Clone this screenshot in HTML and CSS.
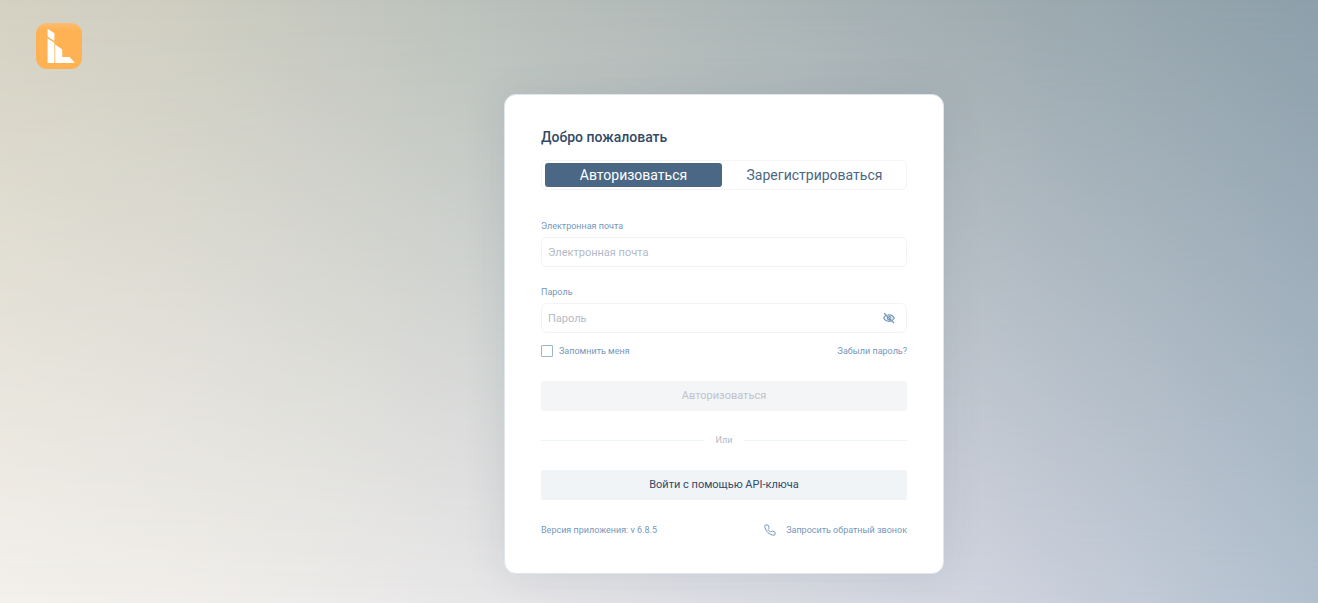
FILE: index.html
```
<!DOCTYPE html>
<html lang="ru">
<head>
    <meta charset="UTF-8">
    <meta name="viewport" content="width=device-width, initial-scale=1.0">
    <title>Авторизоваться</title>
    <link rel="stylesheet" href="styles.css">
</head>

<body>
    <div class="page">
        <header class="side">
            <a href="#" class="logo" aria-label="Главная">
                <svg width="46" height="46" viewBox="0 0 46 46">
                    <defs>
                        <linearGradient id="logo-fill" x1="0" y1="0" x2="0" y2="1">
                            <stop offset="0" stop-color="#fbbd74"/>
                            <stop offset="0.15" stop-color="#ffb254"/>
                        </linearGradient>
                    </defs>
                    <rect width="46" height="46" rx="11" fill="url(#logo-fill)"/>
                    <path d="M11.600 5.700l6.800 4.600v7.600l-6.800-4.400zM11.600 15.300l6.800 4.500V40h-6.800zM19.200 21.500l7 5V34h7.300l4.800 5v1H19.200z" fill="#fff"/>
                </svg>
            </a>
        </header>
        <main class="content">
            <form class="card">
                <h1>Добро пожаловать</h1>
                <div class="tabs">
                    <button type="button" class="tab active">Авторизоваться</button>
                    <button type="button" class="tab">Зарегистрироваться</button>
                </div>
                <div class="field">
                    <label for="email">Электронная почта</label>
                    <div class="input-box">
                        <input type="email" id="email" placeholder="Электронная почта">
                    </div>
                </div>
                <div class="field">
                    <label for="password">Пароль</label>
                    <div class="input-box">
                        <input type="password" id="password" placeholder="Пароль">
                        <button type="button" class="eye" aria-label="Показать пароль">
                            <svg width="12" height="12" viewBox="0 0 24 24" fill="none" stroke="currentColor" stroke-width="2.500" stroke-linecap="round">
                                <path d="M3 3l18 18M7 6.500C4.500 7.800 2.500 9.800 1.500 12c2 4 6 6.500 10.500 6.500 1.800 0 3.500-.4 5-1.100M10.500 5.600c5.200-.5 9.800 2 12 6.400-.7 1.500-1.700 2.700-2.900 3.700"/>
                                <path d="M9.300 10c-2 3 1 6.800 4.700 5.200M12.500 8.800c2 .2 3.300 1.600 3.500 3.400"/>
                            </svg>
                        </button>
                    </div>
                </div>
                <div class="options">
                    <label class="remember"><input type="checkbox">Запомнить меня</label>
                    <a href="#">Забыли пароль?</a>
                </div>
                <button type="submit" class="button" disabled>Авторизоваться</button>
                <div class="divider">Или</div>
                <button type="button" class="button button-api">Войти с помощью API-ключа</button>
                <div class="footer">
                    <span>Версия приложения: v 6.8.5</span>
                    <a href="#" class="callback">
                        <svg width="12" height="12" viewBox="0 0 24 24" fill="none" stroke="currentColor" stroke-width="2" stroke-linejoin="round">
                            <path d="M22 17v3.500a2 2 0 0 1-2.200 2C10 21.600 2.400 14 1.500 4.200a2 2 0 0 1 2-2.200H7a2 2 0 0 1 2 1.700l.9 3.600a2 2 0 0 1-.5 2L8 10.700a16 16 0 0 0 5.500 5.500l1.400-1.400a2 2 0 0 1 2-.5l3.600.9A2 2 0 0 1 22 17z"/>
                        </svg>
                        Запросить обратный звонок
                    </a>
                </div>
            </form>
        </main>
    </div>
</body>

</html>
```
FILE: styles.css
```
* {
    box-sizing: border-box;
}
body {
    font-family: Roboto, sans-serif;
    margin: 0;
    font-size: 9px;
    color: #7598bb;
}
button,
input {
    font-family: inherit;
}
a {
    color: inherit;
    text-decoration: none;
}
svg {
    display: block;
}
.page {
    display: grid;
    grid-template-columns: 130px 1fr;
    min-height: 100vh;
    background: linear-gradient(to right, #f4f1ec 0%, #eeecea 23%, #e7e6e8 38%, #d3d6e1 72%, #b2c0ce 100%);
}
/* darker top tones fading down into the light ones */
.page::before {
    content: "";
    grid-area: 1 / 1 / 2 / 3;
    background: linear-gradient(to right, #d4d1c2 0%, #cecdc0 13%, #b9c0bb 38%, #a1adb1 72%, #8d9faa 100%);
    -webkit-mask-image: linear-gradient(to bottom, #000, transparent);
    mask-image: linear-gradient(to bottom, #000, transparent);
}
.side {
    grid-area: 1 / 1 / 2 / 2;
    padding: 23px 36px;
    z-index: 1;
}
.content {
    grid-area: 1 / 2 / 2 / 3;
    display: flex;
    justify-content: center;
    align-items: flex-start;
    padding: 94px 0 28px;
    z-index: 1;
}
.card {
    width: 100%;
    max-width: 440px;
    padding: 34px 36px;
    background: #fff;
    border: 1px solid #dfe6ec;
    border-radius: 12px;
    box-shadow: 0 0 40px rgba(60, 80, 100, 0.12);
}
h1 {
    margin: 0 0 15px;
    font-size: 14px;
    line-height: 16px;
    font-weight: 500;
    color: #324b66;
}
.tabs {
    display: flex;
    gap: 4px;
    height: 30px;
    margin-bottom: 30px;
    padding: 2px 3px;
    border: 1px solid #f3f4f3;
    border-radius: 5px;
}
.tab {
    flex: 1;
    padding: 0;
    font-size: 14px;
    color: #4a6785;
    background: none;
    border: none;
    border-radius: 3px;
    cursor: pointer;
}
.tab.active {
    color: #fff;
    background: #4a6785;
}
.field {
    margin-bottom: 19px;
}
.field label {
    display: block;
    margin-bottom: 5px;
    line-height: 12px;
}
.input-box {
    display: flex;
    align-items: center;
    height: 30px;
    padding: 0 11px 0 6px;
    border: 1px solid #f0f4f8;
    border-radius: 6px;
}
.input-box input {
    flex: 1;
    min-width: 0;
    padding: 0;
    font-size: 11px;
    color: #324b66;
    background: none;
    border: none;
    outline: none;
}
.input-box input::placeholder {
    color: #b3bac6;
}
.eye {
    padding: 0;
    color: #7598bb;
    background: none;
    border: none;
    cursor: pointer;
}
.options {
    display: flex;
    justify-content: space-between;
    align-items: center;
    height: 12px;
    margin: -7px 0 24px;
}
.remember {
    display: flex;
    align-items: center;
    gap: 6px;
}
.remember input {
    appearance: none;
    width: 12px;
    height: 12px;
    margin: 0;
    border: 1px solid #9ab5d0;
    border-radius: 1px;
}
.remember input:checked {
    background: #4a6785;
}
.button {
    display: block;
    width: 100%;
    height: 30px;
    padding: 0 0 2px;
    font-size: 11px;
    color: #bfc3ca;
    background: #f4f5f7;
    border: none;
    border-radius: 3px;
}
.button-api {
    color: #324b66;
    background: #f0f4f7;
    cursor: pointer;
}
.divider {
    display: flex;
    align-items: center;
    gap: 12px;
    height: 12px;
    margin: 23px 0 24px;
    color: #b3bac6;
}
.divider::before,
.divider::after {
    content: "";
    flex: 1;
    height: 1px;
    background: #eef4f9;
}
.footer {
    display: flex;
    justify-content: space-between;
    align-items: center;
    height: 12px;
    margin: 24px 0 3px;
}
.callback {
    display: flex;
    align-items: center;
    gap: 10px;
}
```
